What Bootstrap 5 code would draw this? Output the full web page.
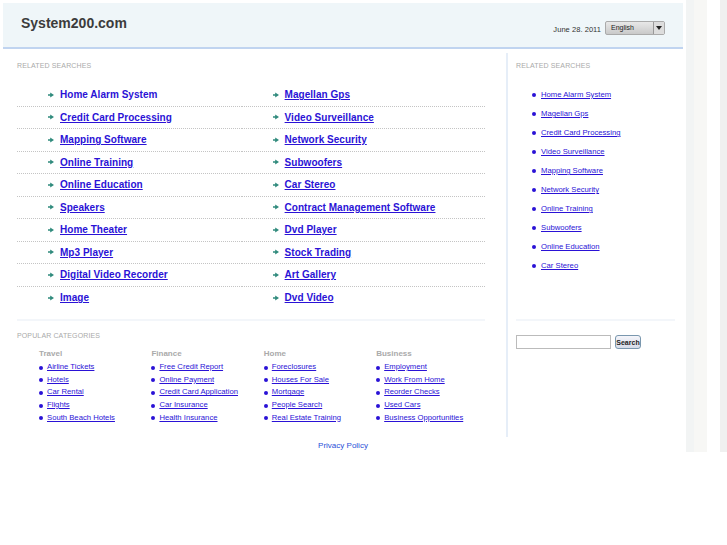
<!DOCTYPE html>
<html lang="en"><head><meta charset="utf-8"><title>System200.com</title>
<link href="https://cdn.jsdelivr.net/npm/bootstrap@5.3.0/dist/css/bootstrap.min.css" rel="stylesheet">
<style>
html,body{height:100%}
body{font-family:"Liberation Sans",Arial,sans-serif;color:#333;background:#fff;font-size:9px;overflow:hidden}
a{color:#2a12d6}
.stage{display:flex;height:452px;padding-top:3px}
.wrap{width:680px;margin-left:3px;flex:none}
.strip{margin-left:3px;width:41px;display:flex;height:452px;margin-top:-3px}
.s1{width:8px;background:#f2f4f4}.s2{width:13px;background:#f7f7f5}.s3{width:13px;background:#fff}.s4{width:7px;background:#f0f0f0}
.head{height:46px;background:#eff6f9;border-bottom:2px solid #c0d4f0;padding:0 18px 0 18px}
.brand{font-size:14px;font-weight:700;color:#3c3c3c;line-height:16px;padding-top:12px}
.dt{font-size:7.5px;color:#333;letter-spacing:.05px;padding-top:21px;margin-right:4px}
.lang{width:60px;height:14px;margin-top:18px;border:1px solid #aaa;border-radius:2px;background:linear-gradient(#e8e8e8,#c9c9c9);font-size:7px;line-height:12px;padding-left:5px;position:relative;color:#222}
.lang i{position:absolute;right:0;top:0;bottom:0;width:11px;border-left:1px solid #999;background:#ddd}
.lang i::after{content:"";position:absolute;left:2px;top:4px;border:3px solid transparent;border-top:4px solid #222;border-bottom:0}
.mainc{width:505px;margin-top:4px;padding:1px 21px 0 14px;border-right:2px solid #e6eef8;height:384px;flex:none}
.sidec{padding:5px 8px 0 8px;width:175px;flex:none}
.cap{font-size:7px;color:#aaa;letter-spacing:.13px;line-height:12px;margin:6px 0 0;font-weight:400;text-transform:uppercase}
.cap2{margin-top:9px}
.bigrows{display:grid;grid-template-columns:224.6px 1fr;margin-top:12px}
.bigrow{height:22.5px;line-height:21px;border-bottom:1px dotted #c4c4c4;padding-left:31px;font-size:10px;font-weight:700;display:flex;align-items:center;gap:6px;white-space:nowrap}
.bigrow.endr{border-bottom:0}
.bigrow a{letter-spacing:.03px}
.sep{height:2px;background:#f3f6fa;margin-top:10px}
.nounder{text-decoration:none}
.catgrid{display:grid;grid-template-columns:repeat(4,112.4px);padding-left:22px;margin-top:6px}
.cat-t{font-size:8px;font-weight:700;color:#aaa;line-height:12px;margin-bottom:1px}
.cat-l{list-style:none;padding:0;margin:0}
.cat-l li{height:12.67px;line-height:12.67px;font-size:7.7px;white-space:nowrap;display:flex;align-items:center;gap:4px}
.dot{width:4px;height:4px;background:#2a12d6;border-radius:50%;flex:none;margin-top:1px}
.side-l{list-style:none;padding:0 0 0 16px;margin:13px 0 0}
.side-l li{height:19px;line-height:19px;font-size:7.7px;display:flex;align-items:center;gap:5px}
.sidewrap{height:259px}
.sform{display:flex;gap:4px;margin-top:14px}
.sinp{width:95px;height:14px;border:1px solid #bbb;background:#fff;padding:0}
.sbtn{width:26px;height:14px;padding:0;border:1px solid #7a97ae;border-radius:3px;background:linear-gradient(#f5f5fa,#d6dce8);font-size:7px;font-weight:700;line-height:11px;color:#222;font-family:"Liberation Sans",sans-serif}
.foot{width:680px;text-align:center;margin-left:3px;margin-top:-12px;font-size:8px;line-height:12px;position:relative}
.foot a{text-decoration:none;color:#2a4fd8}
</style></head><body>
<div class="stage">
 <div class="wrap">
  <div class="head d-flex justify-content-between">
   <div class="brand">System200.com</div>
   <div class="d-flex"><span class="dt">June 28. 2011</span><div class="lang">English<i></i></div></div>
  </div>
  <div class="d-flex">
   <div class="mainc">
    <h2 class="cap">Related Searches</h2>
    <div class="bigrows" id="big"></div>
    <div class="sep"></div>
    <h2 class="cap cap2">Popular Categories</h2>
    <div class="catgrid" id="cats"></div>
   </div>
   <div class="sidec">
    <div class="sidewrap">
    <h2 class="cap">Related Searches</h2>
    <ul class="side-l" id="side"></ul>
    </div>
    <div class="sep mt-0"></div>
    <form class="sform" onsubmit="return false"><input class="sinp" type="text" aria-label="Search"><button class="sbtn" type="button">Search</button></form>
   </div>
  </div>
 </div>
 <div class="strip"><div class="s1"></div><div class="s2"></div><div class="s3"></div><div class="s4"></div></div>
</div>
<div class="foot"><a href="#">Privacy Policy</a></div>
<script>
var arrow='<svg width="6" height="6" viewBox="0 0 6 6" aria-hidden="true" style="flex:none"><path d="M0 2.2h2.2V.4L6 3 2.2 5.6V3.8H0z" fill="#2f8a7c"/></svg>';
var L=["Home Alarm System","Credit Card Processing","Mapping Software","Online Training","Online Education","Speakers","Home Theater","Mp3 Player","Digital Video Recorder","Image"];
var R=["Magellan Gps","Video Surveillance","Network Security","Subwoofers","Car Stereo","Contract Management Software","Dvd Player","Stock Trading","Art Gallery","Dvd Video"];
var h='';for(var i=0;i<10;i++){[L[i],R[i]].forEach(function(t,j){h+='<div class="bigrow'+(i==9?' endr':'')+'">'+arrow+'<a href="#"'+(i==0&&j==0?' class="nounder"':'')+'>'+t+'</a></div>';});}
document.getElementById('big').innerHTML=h;
var C=[["Travel",["Airline Tickets","Hotels","Car Rental","Flights","South Beach Hotels"]],["Finance",["Free Credit Report","Online Payment","Credit Card Application","Car Insurance","Health Insurance"]],["Home",["Foreclosures","Houses For Sale","Mortgage","People Search","Real Estate Training"]],["Business",["Employment","Work From Home","Reorder Checks","Used Cars","Business Opportunities"]]];
document.getElementById('cats').innerHTML=C.map(function(c){return '<div><div class="cat-t">'+c[0]+'</div><ul class="cat-l">'+c[1].map(function(t){return '<li><span class="dot"></span><a href="#">'+t+'</a></li>'}).join('')+'</ul></div>'}).join('');
document.getElementById('side').innerHTML=["Home Alarm System","Magellan Gps","Credit Card Processing","Video Surveillance","Mapping Software","Network Security","Online Training","Subwoofers","Online Education","Car Stereo"].map(function(t){return '<li><span class="dot"></span><a href="#">'+t+'</a></li>'}).join('');
</script>
</body></html>
